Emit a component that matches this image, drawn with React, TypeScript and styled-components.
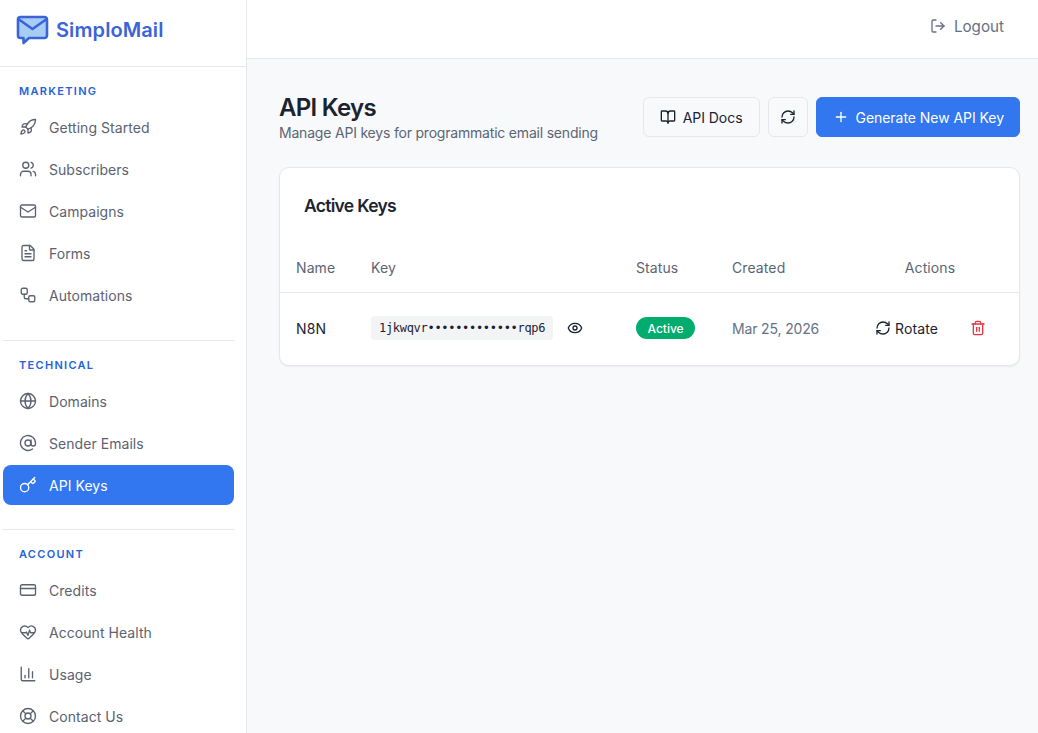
import styled, { createGlobalStyle } from 'styled-components'
import {
  AtSign,
  BookOpen,
  ChartColumn,
  CreditCard,
  Eye,
  FileText,
  Globe,
  HeartPulse,
  Key,
  LifeBuoy,
  LogOut,
  Mail,
  Plus,
  RefreshCw,
  Rocket,
  Trash2,
  Users,
  Workflow,
} from 'lucide-react'

const GlobalStyle = createGlobalStyle`
  html, body {
    margin: 0;
    height: 100%;
    overflow: hidden;
    background: #f8f9fb;
    font-family: Inter, "Liberation Sans", sans-serif;
  }
  * { box-sizing: border-box; }
`

const sections = [
  {
    title: 'Marketing',
    items: [
      { label: 'Getting Started', icon: Rocket },
      { label: 'Subscribers', icon: Users },
      { label: 'Campaigns', icon: Mail },
      { label: 'Forms', icon: FileText },
      { label: 'Automations', icon: Workflow },
    ],
  },
  {
    title: 'Technical',
    items: [
      { label: 'Domains', icon: Globe },
      { label: 'Sender Emails', icon: AtSign },
      { label: 'API Keys', icon: Key, active: true },
    ],
  },
  {
    title: 'Account',
    items: [
      { label: 'Credits', icon: CreditCard },
      { label: 'Account Health', icon: HeartPulse },
      { label: 'Usage', icon: ChartColumn },
      { label: 'Contact Us', icon: LifeBuoy },
    ],
  },
]

const App: React.FC = () => {
  return (
    <Page>
      <GlobalStyle />
      <Sidebar>
        <Brand>
          <svg width="33" height="30" viewBox="0 0 33 30" fill="none">
            <path
              d="M4.500 2h24A2.500 2.500 0 0 1 31 4.500v16a2.500 2.500 0 0 1-2.500 2.500H13l-5.500 5v-5H4.500A2.500 2.500 0 0 1 2 20.500v-16A2.500 2.500 0 0 1 4.500 2Z"
              fill="#a8cdf4"
              stroke="#3b64d8"
              strokeWidth="2.600"
              strokeLinejoin="round"
            />
            <path
              d="M3 4.500 16.500 14 30 4.500"
              stroke="#3b64d8"
              strokeWidth="2.600"
              strokeLinecap="round"
              strokeLinejoin="round"
            />
          </svg>
          <BrandName>SimploMail</BrandName>
        </Brand>
        <Nav>
          {sections.map((section) => (
            <Section key={section.title}>
              <SectionTitle>{section.title}</SectionTitle>
              <NavList>
                {section.items.map((item) => (
                  <NavItem key={item.label} $active={item.active}>
                    <item.icon size={18} strokeWidth={1.8} />
                    {item.label}
                  </NavItem>
                ))}
              </NavList>
            </Section>
          ))}
        </Nav>
      </Sidebar>
      <Main>
        <TopBar>
          <LogoutButton>
            <LogOut size={16} strokeWidth={2} />
            Logout
          </LogoutButton>
        </TopBar>
        <Content>
          <PageHead>
            <div>
              <Title>API Keys</Title>
              <Subtitle>Manage API keys for programmatic email sending</Subtitle>
            </div>
            <Actions>
              <OutlineButton>
                <BookOpen size={16} strokeWidth={2} />
                API Docs
              </OutlineButton>
              <IconButton aria-label="Refresh">
                <RefreshCw size={16} strokeWidth={2} />
              </IconButton>
              <PrimaryButton>
                <Plus size={16} strokeWidth={2} />
                Generate New API Key
              </PrimaryButton>
            </Actions>
          </PageHead>
          <Card>
            <CardTitle>Active Keys</CardTitle>
            <Table>
              <colgroup>
                <col width="75" />
                <col width="265" />
                <col width="96" />
                <col width="125" />
                <col />
              </colgroup>
              <thead>
                <tr>
                  <Th>Name</Th>
                  <Th>Key</Th>
                  <Th>Status</Th>
                  <Th>Created</Th>
                  <Th $center>Actions</Th>
                </tr>
              </thead>
              <tbody>
                <tr>
                  <NameCell>N8N</NameCell>
                  <Td>
                    <KeyWrap>
                      <KeyCode>1jkwqvr•••••••••••••rqp6</KeyCode>
                      <Eye size={16} strokeWidth={2} color="#1c2330" />
                    </KeyWrap>
                  </Td>
                  <Td>
                    <Badge>Active</Badge>
                  </Td>
                  <DateCell>Mar 25, 2026</DateCell>
                  <Td>
                    <RowActions>
                      <RotateButton>
                        <RefreshCw size={16} strokeWidth={2} />
                        Rotate
                      </RotateButton>
                      <Trash2 size={16} strokeWidth={2} color="#ef3340" />
                    </RowActions>
                  </Td>
                </tr>
              </tbody>
            </Table>
          </Card>
        </Content>
      </Main>
    </Page>
  )
}

export default App

const Page = styled.div`
  display: flex;
  height: 733px;
  overflow: hidden;
`

const Sidebar = styled.aside`
  flex: 0 0 247px;
  height: 733px;
  overflow: hidden;
  background: #ffffff;
  border-right: 1px solid #e5e7eb;
`

const Brand = styled.div`
  display: flex;
  align-items: center;
  gap: 7px;
  height: 67px;
  padding: 0 0 6px 16px;
  border-bottom: 1px solid #e5e7eb;
`

const BrandName = styled.span`
  color: #3b64d8;
  font-size: 20px;
  font-weight: 600;
  letter-spacing: 0.1px;
`

const Nav = styled.nav`
  width: 234px;
  padding-left: 3px;
`

const Section = styled.section`
  padding: 16px 0 24px;
  border-bottom: 1px solid #e5e7eb;

  &:first-child {
    padding-bottom: 25px;
  }

  &:last-child {
    border-bottom: 0;
  }
`

const SectionTitle = styled.h3`
  margin: 0 0 8px;
  padding-left: 16px;
  color: #2563db;
  font-size: 11px;
  font-weight: 600;
  line-height: 16px;
  letter-spacing: 1.3px;
  text-transform: uppercase;
`

const NavList = styled.div`
  display: flex;
  flex-direction: column;
  gap: 2px;
`

const NavItem = styled.a<{ $active?: boolean }>`
  display: flex;
  align-items: center;
  gap: 12px;
  height: 40px;
  padding-left: 16px;
  border-radius: 8px;
  color: ${(p) => (p.$active ? '#ffffff' : '#5b6270')};
  background: ${(p) => (p.$active ? '#3276f0' : 'transparent')};
  font-size: 14px;
  font-weight: 400;
  letter-spacing: 0.05px;
`

const Main = styled.main`
  flex: 1;
  min-width: 0;
`

const TopBar = styled.header`
  display: flex;
  align-items: center;
  justify-content: flex-end;
  height: 59px;
  padding: 0 34px 6px 0;
  background: #ffffff;
  border-bottom: 1px solid #e5e7eb;
`

const LogoutButton = styled.div`
  display: flex;
  align-items: center;
  gap: 8px;
  color: #667085;
  font-size: 15.2px;
`

const Content = styled.div`
  padding: 38px 18px 0 32px;
`

const PageHead = styled.div`
  display: flex;
  align-items: flex-start;
  justify-content: space-between;
  margin-bottom: 24px;
`

const Title = styled.h1`
  margin: 0;
  color: #1c2330;
  font-size: 24px;
  font-weight: 600;
  line-height: 22px;
  letter-spacing: -0.7px;
`

const Subtitle = styled.p`
  margin: 4px 0 0;
  color: #5b6574;
  font-size: 14px;
  line-height: 20px;
  letter-spacing: -0.2px;
`

const Actions = styled.div`
  display: flex;
  gap: 8px;
`

const OutlineButton = styled.button`
  display: flex;
  align-items: center;
  gap: 7px;
  height: 40px;
  padding: 0 16px;
  border: 1px solid #e5e7eb;
  border-radius: 6px;
  background: #f8f9fb;
  color: #1c2330;
  font: 400 14px Inter, sans-serif;
  letter-spacing: -0.05px;
`

const IconButton = styled(OutlineButton)`
  justify-content: center;
  width: 40px;
  padding: 0;
`

const PrimaryButton = styled(OutlineButton)`
  padding-right: 15px;
  border-color: #3276f0;
  background: #3276f0;
  color: #ffffff;
`

const Card = styled.div`
  height: 199px;
  background: #ffffff;
  border: 1px solid #e5e7eb;
  border-radius: 10px;
  box-shadow: 0 1px 2px rgba(16, 24, 40, 0.06);
`

const CardTitle = styled.h2`
  margin: 0;
  padding: 24px 24px 0;
  color: #1c2330;
  font-size: 17.5px;
  font-weight: 600;
  line-height: 28px;
  letter-spacing: -0.7px;
`

const Table = styled.table`
  width: 100%;
  margin-top: 24px;
  border-collapse: collapse;
  table-layout: fixed;
`

const Th = styled.th<{ $center?: boolean }>`
  height: 48px;
  padding: 0 16px;
  border-bottom: 1px solid #e5e7eb;
  color: #5b6574;
  font-size: 14px;
  font-weight: 400;
  letter-spacing: 0.1px;
  text-align: ${(p) => (p.$center ? 'center' : 'left')};
`

const Td = styled.td`
  height: 72px;
  padding: 0 16px;
  color: #1c2330;
  font-size: 14px;
`

const NameCell = styled(Td)`
  font-weight: 400;
  letter-spacing: 0.2px;
`

const DateCell = styled(Td)`
  color: #667085;
  letter-spacing: -0.15px;
`

const KeyWrap = styled.div`
  display: flex;
  align-items: center;
  gap: 14px;
`

const KeyCode = styled.code`
  padding: 4px 8px;
  border-radius: 4px;
  background: #f3f4f6;
  color: #1c2330;
  font-family: "DejaVu Sans Mono", "Liberation Mono", monospace;
  font-size: 12px;
  line-height: 16px;
  letter-spacing: -0.3px;
  white-space: nowrap;
`

const Badge = styled.span`
  display: inline-flex;
  align-items: center;
  height: 22px;
  padding: 0 11.5px;
  border-radius: 11px;
  background: #00ad6e;
  color: #ffffff;
  font-size: 12px;
  font-weight: 500;
`

const RowActions = styled.div`
  display: flex;
  align-items: center;
  justify-content: flex-end;
  gap: 32px;
  padding-right: 17px;
`

const RotateButton = styled.div`
  display: flex;
  align-items: center;
  gap: 4px;
  color: #1c2330;
  font-weight: 400;
  letter-spacing: 0.1px;
`
